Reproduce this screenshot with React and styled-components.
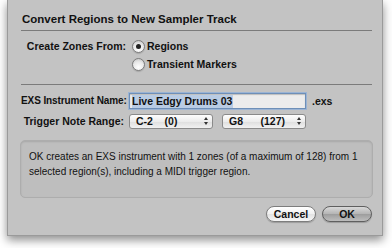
import React from 'react'
import styled, { createGlobalStyle } from 'styled-components'

const Global = createGlobalStyle`
  html, body {
    margin: 0;
    padding: 0;
    background: #ffffff;
  }
  body {
    width: 392px;
    height: 248px;
    overflow: hidden;
    font-family: "Liberation Sans", "DejaVu Sans", sans-serif;
    color: #111;
  }
`;

const Dialog = styled.div`
  margin-left: 7px;
  width: 376px;
  height: 236px;
  box-sizing: border-box;
  padding: 0 10px 0 13px;
  background: #c3c3c3;
  border: 1px solid #9a9a9a;
  border-top: none;
  box-shadow: 0 4px 9px rgba(0, 0, 0, 0.45);
  display: flex;
  flex-direction: column;
`;

const Title = styled.div`
  padding-top: 12px;
  padding-bottom: 4px;
  line-height: 14px;
  font-size: 11.5px;
  font-weight: bold;
  border-bottom: 1px solid #7b7b7b;
  padding-left: 1px;
`;

const Section = styled.div`
  display: grid;
  grid-template-columns: ${p => p.labelWidth}px auto;
  column-gap: ${p => p.gap}px;
  row-gap: ${p => p.rowGap}px;
  padding: ${p => p.pad};
  border-bottom: ${p => (p.rule ? '1px solid #7b7b7b' : 'none')};
  align-items: center;
`;

const Label = styled.div`
  text-align: right;
  font-size: ${p => (p.tight ? '10px' : '10.5px')};
  font-weight: bold;
  line-height: 16px;
  white-space: nowrap;
  letter-spacing: ${p => (p.tight ? '-0.1px' : '0')};
`;

const RadioRow = styled.label`
  display: flex;
  align-items: center;
  gap: 2px;
  font-size: 10.5px;
  font-weight: bold;
  line-height: 16px;
  grid-column: 2;
`;

const RadioDot = styled.span`
  width: 13px;
  height: 13px;
  border-radius: 50%;
  box-sizing: border-box;
  border: 1px solid #7c7c7c;
  background: radial-gradient(circle at 50% 75%, #ffffff 0%, #e8e8e8 55%, #bcbcbc 100%);
  display: flex;
  align-items: center;
  justify-content: center;
  box-shadow: 0 1px 1px rgba(0, 0, 0, 0.15);

  &::after {
    content: '';
    width: 5px;
    height: 5px;
    border-radius: 50%;
    background: #222;
    display: ${p => (p.checked ? 'block' : 'none')};
  }
`;

const FieldRow = styled.div`
  display: flex;
  align-items: center;
  gap: ${p => p.gap || 6}px;
`;

const TextInput = styled.div`
  width: 177px;
  height: 16px;
  box-sizing: border-box;
  border: 1px solid #6e8fb8;
  box-shadow: 0 0 0 1px #9bb4d4, inset 0 1px 1px rgba(0, 0, 0, 0.2);
  background: #ececec;
  display: flex;
  align-items: center;
  padding-left: 2px;
  font-size: 10.5px;
  font-weight: bold;
`;

const Selected = styled.span`
  background: #b9cce4;
  line-height: 13px;
  padding-right: 1px;
`;

const Ext = styled.span`
  font-size: 10.5px;
  font-weight: bold;
`;

const Popup = styled.div`
  width: ${p => p.w}px;
  height: 15px;
  box-sizing: border-box;
  border: 1px solid #8a8a8a;
  border-radius: 3px;
  background: linear-gradient(#fefefe, #ececec 50%, #dedede 51%, #f1f1f1);
  display: flex;
  align-items: center;
  padding: 0 4px 0 6px;
  font-size: 10.5px;
  font-weight: bold;
  white-space: pre;
`;

const PopupText = styled.span`
  flex: 1;
`;

const Arrows = styled.span`
  display: flex;
  flex-direction: column;
  gap: 2px;
  align-items: center;

  &::before, &::after {
    content: '';
    border-left: 2px solid transparent;
    border-right: 2px solid transparent;
  }
  &::before { border-bottom: 3px solid #333; }
  &::after { border-top: 3px solid #333; }
`;

const InfoBox = styled.div`
  margin: 11px 0 0 -1px;
  width: 353px;
  height: 58px;
  box-sizing: border-box;
  border: 1px solid #adadad;
  border-radius: 5px;
  background: #bebebe;
  box-shadow: inset 0 1px 2px rgba(0, 0, 0, 0.12);
  padding: 8px 6px 0 8px;
  font-size: 10px;
  line-height: 15px;
`;

const Buttons = styled.div`
  display: flex;
  justify-content: flex-end;
  gap: 6px;
  margin-top: 8px;
`;

const Button = styled.div`
  width: 50px;
  height: 16px;
  box-sizing: border-box;
  border-radius: 8px;
  border: 1px solid ${p => (p.primary ? '#5f5f5f' : '#7d7d7d')};
  background: ${p =>
    p.primary
      ? 'linear-gradient(#d9d9d9, #b4b4b4 50%, #9d9d9d 51%, #bdbdbd)'
      : 'linear-gradient(#ffffff, #f0f0f0 50%, #e2e2e2 51%, #f6f6f6)'};
  box-shadow: 0 1px 1px rgba(0, 0, 0, 0.2);
  display: flex;
  align-items: center;
  justify-content: center;
  font-size: 10.5px;
  font-weight: bold;
`;

const App = () => (
  <>
    <Global />
    <Dialog>
      <Title>Convert Regions to New Sampler Track</Title>
      <Section labelWidth={105} gap={6} rowGap={2} pad="7px 0 12px" rule>
        <Label>Create Zones From:</Label>
        <RadioRow style={{ gridRow: 1 }}>
          <RadioDot checked />
          Regions
        </RadioRow>
        <RadioRow>
          <RadioDot />
          Transient Markers
        </RadioRow>
      </Section>
      <Section labelWidth={103} gap={5} rowGap={4} pad="8px 0 0">
        <Label tight>EXS Instrument Name:</Label>
        <FieldRow gap={6}>
          <TextInput>
            <Selected>Live Edgy Drums 03</Selected>
          </TextInput>
          <Ext>.exs</Ext>
        </FieldRow>
        <Label>Trigger Note Range:</Label>
        <FieldRow gap={9}>
          <Popup w={84}>
            <PopupText>{'C-2    (0)'}</PopupText>
            <Arrows />
          </Popup>
          <Popup w={84}>
            <PopupText>{'G8      (127)'}</PopupText>
            <Arrows />
          </Popup>
        </FieldRow>
      </Section>
      <InfoBox>
        OK creates an EXS instrument with 1 zones (of a maximum of 128) from 1
        selected region(s), including a MIDI trigger region.
      </InfoBox>
      <Buttons>
        <Button>Cancel</Button>
        <Button primary>OK</Button>
      </Buttons>
    </Dialog>
  </>
)

export default App
